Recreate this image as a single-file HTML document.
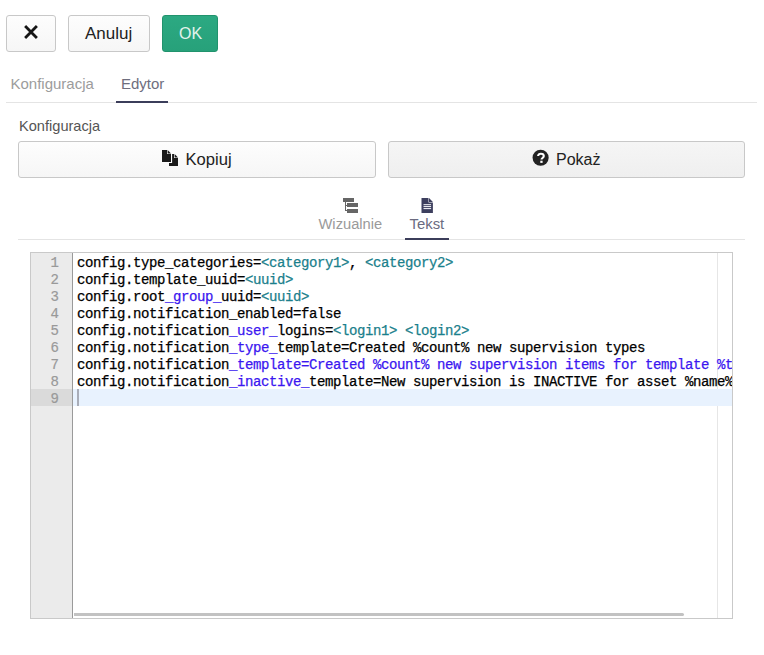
<!DOCTYPE html>
<html><head><meta charset="utf-8">
<style>
*{box-sizing:border-box;margin:0;padding:0}
html,body{width:764px;height:655px;background:#fff;overflow:hidden;position:relative}
body{font-family:"Liberation Sans",sans-serif;color:#333}
.abs{position:absolute}
.btn{position:absolute;border:1px solid #c8c8c8;border-radius:3px;background:linear-gradient(#fdfdfd,#f6f6f6)}
.txt{position:absolute;white-space:nowrap;line-height:1}
#ok{background:linear-gradient(#2ca982,#27a17a);border-color:#21936d}
.hline{position:absolute;height:1px;background:#e4e4e4}
.ul{position:absolute;height:2px;background:#3b3d5a}
#ed{position:absolute;left:30px;top:252px;width:703px;height:367px;border:1px solid #c9c9c9;background:#fff;overflow:hidden}
#gut{position:absolute;left:0;top:0;width:42px;height:365px;background:#ebebeb;border-right:1px solid #9a9a9a}
.ln{position:absolute;left:0;width:28px;text-align:right;font-family:"Liberation Mono",monospace;font-size:14px;color:#999;height:17px;line-height:17px;padding-top:2px;-webkit-text-stroke:0.2px currentColor}
.code{position:absolute;left:46px;font-family:"Liberation Mono",monospace;font-size:14px;letter-spacing:-0.4px;color:#000;white-space:pre;height:17px;line-height:17px;padding-top:2px;-webkit-text-stroke:0.25px currentColor}
.t{color:#1a7f8c}
.e{color:#3a16f0}
</style></head><body>
<!-- top buttons -->
<div class="btn" style="left:6px;top:15px;width:50px;height:37px"></div>
<svg class="abs" style="left:24px;top:25px" width="14" height="14" viewBox="0 0 14 14"><path d="M1.1 1.1L12.9 12.9M12.9 1.1L1.1 12.9" stroke="#151515" stroke-width="2.8" stroke-linecap="butt"/></svg>
<div class="btn" style="left:68px;top:15px;width:82px;height:37px"></div>
<div class="txt" style="left:85px;top:25px;font-size:17px;color:#222">Anuluj</div>
<div class="btn" id="ok" style="left:162px;top:15px;width:56px;height:37px"></div>
<div class="txt" style="left:179px;top:25.5px;font-size:16px;color:#e3f2ec">OK</div>

<!-- tabs -->
<div class="txt" style="left:10.5px;top:75.5px;font-size:15px;color:#9c9c9c">Konfiguracja</div>
<div class="txt" style="left:121px;top:76px;font-size:15px;color:#6e6e7e">Edytor</div>
<div class="hline" style="left:6px;top:102px;width:751px"></div>
<div class="ul" style="left:116px;top:101px;width:52px"></div>

<!-- config label -->
<div class="txt" style="left:19px;top:119px;font-size:14.6px;color:#555">Konfiguracja</div>
<div class="btn" style="left:18px;top:141px;width:358px;height:37px"></div>
<svg class="abs" style="left:160px;top:148px" width="20" height="20" viewBox="160 148 20 20">
<path d="M169 154h5v4h4v8h-9z" fill="#1a1a1a"/>
<path d="M174.6 154l3.4 3.4h-3.4z" fill="#1a1a1a"/>
<path d="M162 150h5v4h4v8h-9z" fill="#1a1a1a" stroke="#fbfbfb" stroke-width="2.2"/>
<path d="M162 150h5v4h4v8h-9z" fill="#1a1a1a"/>
<path d="M167.6 150l3.4 3.4h-3.4z" fill="#1a1a1a"/>
</svg>
<div class="txt" style="left:185.5px;top:151.5px;font-size:16.6px;color:#222">Kopiuj</div>
<div class="btn" style="left:388px;top:141px;width:357px;height:37px;background:linear-gradient(#f5f5f5,#efefef)"></div>
<svg class="abs" style="left:532px;top:149px" width="18" height="18" viewBox="0 0 18 18">
<circle cx="8.6" cy="8.8" r="8.05" fill="#222"/>
<path d="M6.1 7.1C6.1 5.4 7.3 4.7 8.9 4.7C10.6 4.7 11.8 5.6 11.8 7C11.8 8.9 9.5 9.1 9.5 10.6" fill="none" stroke="#fff" stroke-width="2.1"/>
<rect x="8.3" y="11.7" width="2.3" height="2.2" fill="#fff"/>
</svg>
<div class="txt" style="left:556px;top:152px;font-size:16px;color:#222">Pokaż</div>

<!-- sub tabs -->
<svg class="abs" style="left:340px;top:196px" width="20" height="20" viewBox="340 196 20 20" shape-rendering="crispEdges">
<rect x="342.5" y="198" width="11.3" height="3.7" fill="#666"/>
<rect x="344.5" y="201" width="1.2" height="10" fill="#666"/>
<rect x="345" y="204.5" width="3" height="1" fill="#666"/>
<rect x="345" y="210.2" width="3" height="1" fill="#666"/>
<rect x="347.3" y="203.3" width="10.5" height="3.5" fill="#666"/>
<rect x="347.3" y="209.2" width="10.5" height="3.5" fill="#666"/>
</svg>
<div class="txt" style="left:318.5px;top:217px;font-size:14.7px;color:#9a9a9a">Wizualnie</div>
<svg class="abs" style="left:420px;top:196px" width="16" height="20" viewBox="420 196 16 20">
<path d="M421.5 198h7v4.6h4.4v10.3h-11.4z" fill="#3d3f5e"/>
<path d="M429 198l3.9 3.9h-3.9z" fill="#3d3f5e"/>
<rect x="423.5" y="204.1" width="7.6" height="1.1" fill="#e8e8ee"/>
<rect x="423.5" y="206" width="7.6" height="1.1" fill="#e8e8ee"/>
<rect x="423.5" y="208" width="7.6" height="1.1" fill="#e8e8ee"/>
</svg>
<div class="txt" style="left:409.5px;top:217px;font-size:14.9px;color:#6b6b80">Tekst</div>
<div class="hline" style="left:18px;top:239px;width:727px"></div>
<div class="ul" style="left:405px;top:238px;width:44px"></div>

<!-- editor -->
<div id="ed">
  <div id="gut">
    <div style="position:absolute;left:0;top:136px;width:41px;height:17px;background:#dadada"></div>
    <div class="ln" style="top:0px">1</div>
    <div class="ln" style="top:17px">2</div>
    <div class="ln" style="top:34px">3</div>
    <div class="ln" style="top:51px">4</div>
    <div class="ln" style="top:68px">5</div>
    <div class="ln" style="top:85px">6</div>
    <div class="ln" style="top:102px">7</div>
    <div class="ln" style="top:119px">8</div>
    <div class="ln" style="top:136px">9</div>
  </div>
  <div style="position:absolute;left:686px;top:0;width:1px;height:365px;background:#e6e6e6"></div>
  <div style="position:absolute;left:42px;top:136px;width:660px;height:17px;background:#e8f2fe"></div>
  <div style="position:absolute;left:46px;top:136px;width:2px;height:17px;background:#a9adb8"></div>
  <div class="code" style="top:0px">config.type_categories=<span class="t">&lt;category1&gt;</span>, <span class="t">&lt;category2&gt;</span></div>
  <div class="code" style="top:17px">config.template_uuid=<span class="t">&lt;uuid&gt;</span></div>
  <div class="code" style="top:34px">config.root<span class="e">_group_</span>uuid=<span class="t">&lt;uuid&gt;</span></div>
  <div class="code" style="top:51px">config.notification_enabled=false</div>
  <div class="code" style="top:68px">config.notification<span class="e">_user_</span>logins=<span class="t">&lt;login1&gt;</span> <span class="t">&lt;login2&gt;</span></div>
  <div class="code" style="top:85px">config.notification<span class="e">_type_</span>template=Created %count% new supervision types</div>
  <div class="code" style="top:102px">config.notification<span class="e">_template=Created %count% new supervision items for template %template%</span></div>
  <div class="code" style="top:119px">config.notification<span class="e">_inactive_</span>template=New supervision is INACTIVE for asset %name%</div>
  <div style="position:absolute;left:43px;top:360px;width:610px;height:3px;border-radius:0 2px 2px 0;background:#c2c2c2"></div>
</div>
</body></html>
